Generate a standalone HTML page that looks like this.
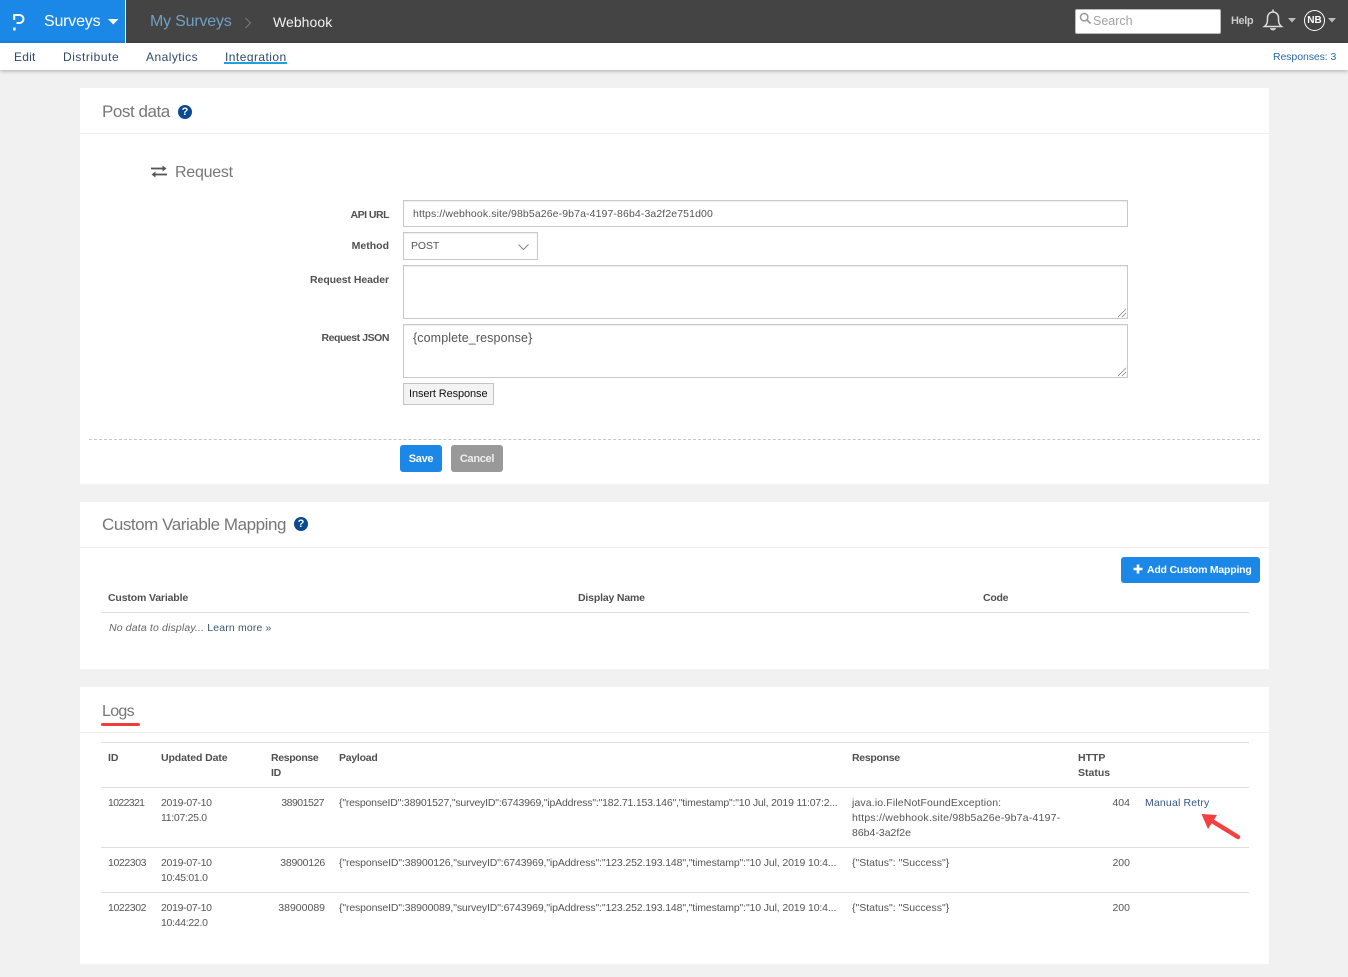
<!DOCTYPE html>
<html lang="en">
<head>
<meta charset="utf-8">
<title>Webhook</title>
<style>
*{box-sizing:border-box}
html,body{margin:0;padding:0}
body{position:relative;width:1348px;height:977px;overflow:hidden;background:#f1f1f1;font-family:"Liberation Sans",sans-serif;font-size:11px;color:#555}
.a,.t{position:absolute}
.t{white-space:nowrap;line-height:15px;margin-top:1px}
.b{font-weight:bold;color:#505050}
.r{text-align:right}
.card{position:absolute;left:80px;width:1189px;background:#fff}
.h{position:absolute;left:102px;font-size:17px;line-height:22px;color:#777;white-space:nowrap}
.ln{position:absolute;height:1px;background:#dedede}
.box{position:absolute;background:#fff;border:1px solid #c9c9c9;box-shadow:inset 0 1px 1px rgba(0,0,0,.08)}
.nav{position:absolute;top:50px;font-size:12px;line-height:15px;color:#2f4a6d;white-space:nowrap;letter-spacing:.45px}
.q{position:absolute;width:14px;height:14px;border-radius:50%;background:#0b4a8f;color:#fff;font:bold 11px/14px "Liberation Sans",sans-serif;text-align:center}
svg{position:absolute;display:block}
</style>
</head>
<body>

<!-- top bar -->
<div class="a" style="left:0;top:0;width:1348px;height:43px;background:#444"></div>
<div class="a" style="left:0;top:0;width:125px;height:43px;background:#1b87e6"></div>
<div class="a" style="left:125px;top:0;width:1px;height:43px;background:#fff"></div>
<svg style="left:12px;top:13px" width="14" height="19" viewBox="0 0 14 19"><path d="M2.200 7V2H7.500a3.700 3.700 0 0 1 0 8H4.500" fill="none" stroke="#fff" stroke-width="2"/><rect x="1.200" y="14.500" width="2.400" height="3" fill="#fff"/></svg>
<div class="t" style="left:44px;top:11px;font-size:16px;line-height:20px;color:#fff;letter-spacing:-.2px">Surveys</div>
<svg style="left:108px;top:19px" width="11" height="6"><path d="M0 0h10.500L5.200 5.500z" fill="#fff"/></svg>
<div class="t" style="left:150px;top:11px;font-size:16px;line-height:20px;color:#6ea0c4;letter-spacing:-.2px">My Surveys</div>
<svg style="left:244px;top:17px" width="8" height="12"><path d="M1.500 1l5 5-5 5" fill="none" stroke="#777" stroke-width="1.200"/></svg>
<div class="t" style="left:273px;top:11px;font-size:14px;line-height:20px;color:#f2f2f2;letter-spacing:.05px">Webhook</div>

<div class="a" style="left:1075px;top:9px;width:146px;height:25px;background:#fff;border:1px solid #bbb;border-radius:2px"></div>
<svg style="left:1079px;top:12px" width="13" height="13" viewBox="0 0 13 13"><circle cx="5.200" cy="5.200" r="3.700" fill="none" stroke="#999" stroke-width="1.500"/><path d="M8 8l3.500 3.500" stroke="#999" stroke-width="1.800"/></svg>
<div class="t" style="left:1093px;top:13px;font-size:12.500px;color:#a2a2a2">Search</div>
<div class="t" style="left:1231px;top:13px;font-size:11px;font-weight:bold;color:#c9c9c9;letter-spacing:-.4px">Help</div>
<svg style="left:1262px;top:8px" width="22" height="24" viewBox="0 0 22 24"><path d="M2.500 18.500c2-1.500 3-3.500 3-6.500V9.500a5.500 5.500 0 0 1 11 0V12c0 3 1 5 3 6.500z" fill="none" stroke="#ddd" stroke-width="1.500"/><path d="M11 1.500v2.500" stroke="#ddd" stroke-width="1.500"/><path d="M8 20h6a3 2.500 0 0 1-6 0z" fill="#ccc"/></svg>
<svg style="left:1288px;top:18px" width="8" height="5"><path d="M0 0h8L4 4.500z" fill="#bbb"/></svg>
<div class="a" style="left:1304px;top:10px;width:21px;height:21px;border:1.300px solid #fff;border-radius:50%;color:#fff;font-size:10px;font-weight:bold;line-height:20px;text-align:center">NB</div>
<svg style="left:1328px;top:18px" width="8" height="5"><path d="M0 0h8L4 4.500z" fill="#bbb"/></svg>

<!-- sub nav -->
<div class="a" style="left:0;top:43px;width:1348px;height:27px;background:#fff;box-shadow:0 1px 4px rgba(0,0,0,.3)"></div>
<div class="nav" style="left:14px;letter-spacing:.2px">Edit</div>
<div class="nav" style="left:63px;letter-spacing:.55px">Distribute</div>
<div class="nav" style="left:146px">Analytics</div>
<div class="nav" style="left:225px">Integration</div>
<div class="a" style="left:224px;top:62px;width:63px;height:2px;background:#1f9fdc"></div>
<div class="t" style="left:1273px;top:49px;font-size:10.500px;color:#2b6aa8;letter-spacing:-.08px">Responses: 3</div>

<!-- post data -->
<div class="card" style="top:88px;height:396px"></div>
<div class="h" style="top:101px;letter-spacing:-.45px">Post data</div>
<div class="q" style="left:178px;top:105px">?</div>
<div class="ln" style="left:80px;top:133px;width:1189px;background:#efefef"></div>

<svg style="left:151px;top:165px" width="16" height="13" viewBox="0 0 16 13"><path d="M0 3.500h13" stroke="#555" stroke-width="1.800"/><path d="M11.500 .5l4 3-4 3z" fill="#555"/><path d="M16 9.500H3" stroke="#555" stroke-width="1.800"/><path d="M4.500 6.500l-4 3 4 3z" fill="#555"/></svg>
<div class="h" style="left:175px;top:162px;font-size:16px;letter-spacing:-.25px">Request</div>

<div class="t b r" style="left:289px;width:100px;top:207px;font-size:10.500px;letter-spacing:-.5px">API URL</div>
<div class="box" style="left:403px;top:200px;width:725px;height:27px"></div>
<div class="t" style="left:413px;top:206px;font-size:10.500px;letter-spacing:.11px">https://webhook.site/98b5a26e-9b7a-4197-86b4-3a2f2e751d00</div>

<div class="t b r" style="left:289px;width:100px;top:238px;font-size:10.500px">Method</div>
<div class="box" style="left:403px;top:232px;width:135px;height:28px"></div>
<div class="t" style="left:411px;top:238px;font-size:10.500px;letter-spacing:-.1px">POST</div>
<svg style="left:518px;top:244px" width="11" height="7"><path d="M.5.500l5 5 5-5" fill="none" stroke="#888" stroke-width="1"/></svg>

<div class="t b r" style="left:289px;width:100px;top:272px;font-size:10.500px;letter-spacing:-.07px">Request Header</div>
<div class="box" style="left:403px;top:265px;width:725px;height:54px"></div>
<svg style="left:1118px;top:308px" width="9" height="10"><path d="M0 9L8 1M4 9l4-4" stroke="#777" stroke-width="1" stroke-dasharray="1 .5"/></svg>

<div class="t b r" style="left:289px;width:100px;top:330px;font-size:10.500px;letter-spacing:-.45px">Request JSON</div>
<div class="box" style="left:403px;top:324px;width:725px;height:54px"></div>
<div class="t" style="left:413px;top:330px;font-size:12.500px;letter-spacing:.1px">{complete_response}</div>
<svg style="left:1118px;top:367px" width="9" height="10"><path d="M0 9L8 1M4 9l4-4" stroke="#777" stroke-width="1" stroke-dasharray="1 .5"/></svg>

<div class="a" style="left:403px;top:383px;width:91px;height:22px;background:#f3f3f3;border:1px solid #c4c4c4"></div>
<div class="t" style="left:409px;top:386px;font-size:11px;color:#111;letter-spacing:-.11px">Insert Response</div>

<div class="a" style="left:89px;top:439px;width:1171px;border-top:1px dashed #c6c6c6"></div>
<div class="a" style="left:400px;top:445px;width:42px;height:27px;background:#1b87e6;border-radius:3px;color:#fff;font-size:11px;font-weight:bold;line-height:28px;text-align:center;letter-spacing:-.3px">Save</div>
<div class="a" style="left:451px;top:445px;width:52px;height:27px;background:#999;border-radius:3px;color:#eee;font-size:11px;font-weight:bold;line-height:28px;text-align:center;letter-spacing:-.3px">Cancel</div>

<!-- custom variable mapping -->
<div class="card" style="top:502px;height:167px"></div>
<div class="h" style="top:514px;letter-spacing:-.45px">Custom Variable Mapping</div>
<div class="q" style="left:294px;top:517px">?</div>
<div class="ln" style="left:80px;top:547px;width:1189px;background:#efefef"></div>

<div class="a" style="left:1121px;top:557px;width:139px;height:26px;background:#1b87e6;border-radius:3px"></div>
<svg style="left:1133px;top:564px" width="10" height="10"><path d="M5 .5v9M.5 5h9" stroke="#fff" stroke-width="2.600"/></svg>
<div class="t" style="left:1147px;top:562px;font-size:10.500px;font-weight:bold;color:#fff;letter-spacing:-.22px">Add Custom Mapping</div>

<div class="t b" style="left:108px;top:590px;font-size:10.500px;letter-spacing:-.15px">Custom Variable</div>
<div class="t b" style="left:578px;top:590px;font-size:10.500px;letter-spacing:-.17px">Display Name</div>
<div class="t b" style="left:983px;top:590px;font-size:10.500px;letter-spacing:-.25px">Code</div>
<div class="ln" style="left:101px;top:612px;width:1148px"></div>
<div class="t" style="left:109px;top:620px;font-size:10.500px;letter-spacing:.15px"><i style="color:#666">No data to display...</i> <span style="color:#3a5676">Learn more »</span></div>

<!-- logs -->
<div class="card" style="top:687px;height:277px"></div>
<div class="h" style="top:701px;font-size:16px;letter-spacing:-.7px">Logs</div>
<div class="a" style="left:101px;top:723px;width:39px;height:3px;background:#f23c3c;border-radius:2px"></div>
<div class="ln" style="left:80px;top:732px;width:1189px;background:#efefef"></div>

<div class="ln" style="left:101px;top:742px;width:1148px"></div>
<div class="t b" style="left:108px;top:750px;font-size:10.500px">ID</div>
<div class="t b" style="left:161px;top:750px;font-size:10.500px;letter-spacing:-.1px">Updated Date</div>
<div class="t b" style="left:271px;top:750px;font-size:10.500px;letter-spacing:-.35px">Response<br>ID</div>
<div class="t b" style="left:339px;top:750px;font-size:10.500px;letter-spacing:-.25px">Payload</div>
<div class="t b" style="left:852px;top:750px;font-size:10.500px;letter-spacing:-.3px">Response</div>
<div class="t b" style="left:1078px;top:750px;font-size:10.500px">HTTP<br>Status</div>
<div class="ln" style="left:101px;top:787px;width:1148px"></div>

<div class="t" style="left:108px;top:795px;font-size:10.500px;letter-spacing:-.65px">1022321</div>
<div class="t" style="left:161px;top:795px;font-size:10.500px;letter-spacing:-.3px">2019-07-10<br>11:07:25.0</div>
<div class="t r" style="left:264px;width:60px;top:795px;font-size:10.500px;letter-spacing:-.5px">38901527</div>
<div class="t" style="left:339px;top:795px;font-size:10.500px;letter-spacing:-.19px">{"responseID":38901527,"surveyID":6743969,"ipAddress":"182.71.153.146","timestamp":"10 Jul, 2019 11:07:2...</div>
<div class="t" style="left:852px;top:795px;font-size:10.500px"><span style="letter-spacing:.13px">java.io.FileNotFoundException:</span><br><span style="letter-spacing:.22px">https://webhook.site/98b5a26e-9b7a-4197-</span><br>86b4-3a2f2e</div>
<div class="t r" style="left:1090px;width:40px;top:795px;font-size:10.500px">404</div>
<div class="t" style="left:1145px;top:795px;font-size:10.500px;color:#34558b;letter-spacing:.17px">Manual Retry</div>
<svg style="left:1198px;top:810px" width="46" height="32" viewBox="0 0 46 32"><path d="M40 27L14 11" stroke="#f5403f" stroke-width="4.500" stroke-linecap="round"/><path d="M3.500 4L19 5 10 19z" fill="#f5403f"/></svg>
<div class="ln" style="left:101px;top:847px;width:1148px"></div>

<div class="t" style="left:108px;top:855px;font-size:10.500px;letter-spacing:-.4px">1022303</div>
<div class="t" style="left:161px;top:855px;font-size:10.500px;letter-spacing:-.3px">2019-07-10<br>10:45:01.0</div>
<div class="t r" style="left:265px;width:60px;top:855px;font-size:10.500px;letter-spacing:-.25px">38900126</div>
<div class="t" style="left:339px;top:855px;font-size:10.500px;letter-spacing:-.13px">{"responseID":38900126,"surveyID":6743969,"ipAddress":"123.252.193.148","timestamp":"10 Jul, 2019 10:4...</div>
<div class="t" style="left:852px;top:855px;font-size:10.500px">{"Status": "Success"}</div>
<div class="t r" style="left:1090px;width:40px;top:855px;font-size:10.500px">200</div>
<div class="ln" style="left:101px;top:892px;width:1148px"></div>

<div class="t" style="left:108px;top:900px;font-size:10.500px;letter-spacing:-.4px">1022302</div>
<div class="t" style="left:161px;top:900px;font-size:10.500px;letter-spacing:-.3px">2019-07-10<br>10:44:22.0</div>
<div class="t r" style="left:265px;width:60px;top:900px;font-size:10.500px">38900089</div>
<div class="t" style="left:339px;top:900px;font-size:10.500px;letter-spacing:-.13px">{"responseID":38900089,"surveyID":6743969,"ipAddress":"123.252.193.148","timestamp":"10 Jul, 2019 10:4...</div>
<div class="t" style="left:852px;top:900px;font-size:10.500px">{"Status": "Success"}</div>
<div class="t r" style="left:1090px;width:40px;top:900px;font-size:10.500px">200</div>

</body>
</html>
